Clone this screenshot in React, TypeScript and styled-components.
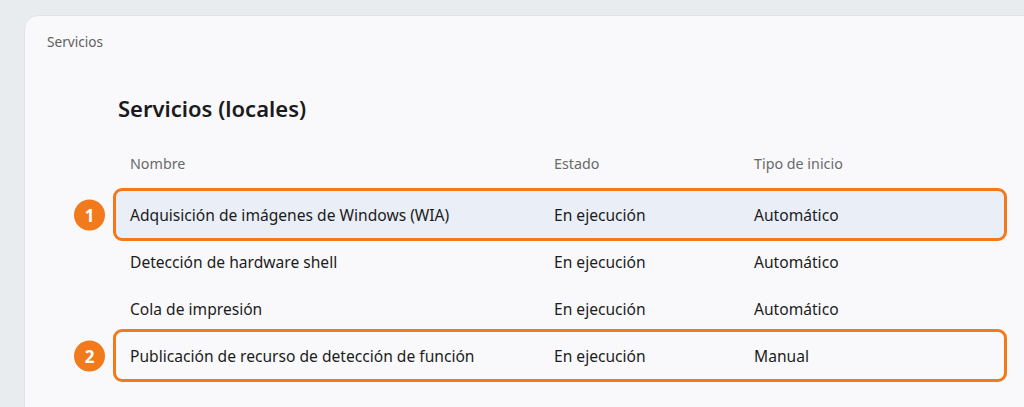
import styled, { createGlobalStyle } from "styled-components";

const Global = createGlobalStyle`
  html, body {
    margin: 0;
    padding: 0;
    background: #e9ecef;
    overflow: hidden;
  }
  body {
    font-family: "Noto Sans", "Open Sans", sans-serif;
    color: #1c1c1c;
  }
`;

const Page = styled.div`
  height: 407px;
  padding: 15px 0 0 24px;
  box-sizing: border-box;
  overflow: hidden;
`;

const Card = styled.section`
  width: 1040px;
  height: 410px;
  box-sizing: border-box;
  background: #f9f9fb;
  border: 1px solid #e0e3e7;
  border-radius: 14px;
  padding: 17px 0 0 22px;
`;

const Crumb = styled.div`
  font-size: 13.6px;
  line-height: 18px;
  color: #5f5f5f;
`;

const Content = styled.div`
  margin: 43px 0 0 69px;
  width: 888px;
`;

const Title = styled.h1`
  margin: 0 0 0 2px;
  font-size: 22px;
  line-height: 28px;
  font-weight: 600;
  color: #1b1b1b;
`;

const Table = styled.div`
  margin-top: 21px;
  display: flex;
  flex-direction: column;
`;

const Row = styled.div<{ $head?: boolean; $marked?: boolean; $fill?: boolean }>`
  position: relative;
  display: grid;
  grid-template-columns: 424px 200px 1fr;
  align-items: center;
  height: ${(p) => (p.$head ? "40px" : "47px")};
  margin-bottom: ${(p) => (p.$head ? "8px" : "0")};
  padding-left: 14px;
  font-size: ${(p) => (p.$head ? "14.3px" : "15.6px")};
  color: ${(p) => (p.$head ? "#6a6a6a" : "#1c1c1c")};
  background: ${(p) => (p.$fill ? "#e9eef7" : "transparent")};
  border-radius: 6px;
  outline: ${(p) => (p.$marked ? "3px solid #f07a1c" : "none")};
`;

const Badge = styled.span`
  position: absolute;
  left: -42px;
  top: 50%;
  transform: translateY(-50%);
  width: 31px;
  height: 31px;
  border-radius: 50%;
  background: #f07a1c;
  color: #ffffff;
  font-size: 17px;
  font-weight: 700;
  display: flex;
  align-items: center;
  justify-content: center;
`;

const rows = [
  { name: "Adquisición de imágenes de Windows (WIA)", state: "En ejecución", start: "Automático", badge: "1", fill: true },
  { name: "Detección de hardware shell", state: "En ejecución", start: "Automático" },
  { name: "Cola de impresión", state: "En ejecución", start: "Automático" },
  { name: "Publicación de recurso de detección de función", state: "En ejecución", start: "Manual", badge: "2" },
];

export default function App() {
  return (
    <>
      <Global />
      <Page>
        <Card>
          <Crumb>Servicios</Crumb>
          <Content>
            <Title>Servicios (locales)</Title>
            <Table>
              <Row $head>
                <span>Nombre</span>
                <span>Estado</span>
                <span>Tipo de inicio</span>
              </Row>
              {rows.map((r) => (
                <Row key={r.name} $marked={!!r.badge} $fill={r.fill}>
                  {r.badge && <Badge>{r.badge}</Badge>}
                  <span>{r.name}</span>
                  <span>{r.state}</span>
                  <span>{r.start}</span>
                </Row>
              ))}
            </Table>
          </Content>
        </Card>
      </Page>
    </>
  );
}
